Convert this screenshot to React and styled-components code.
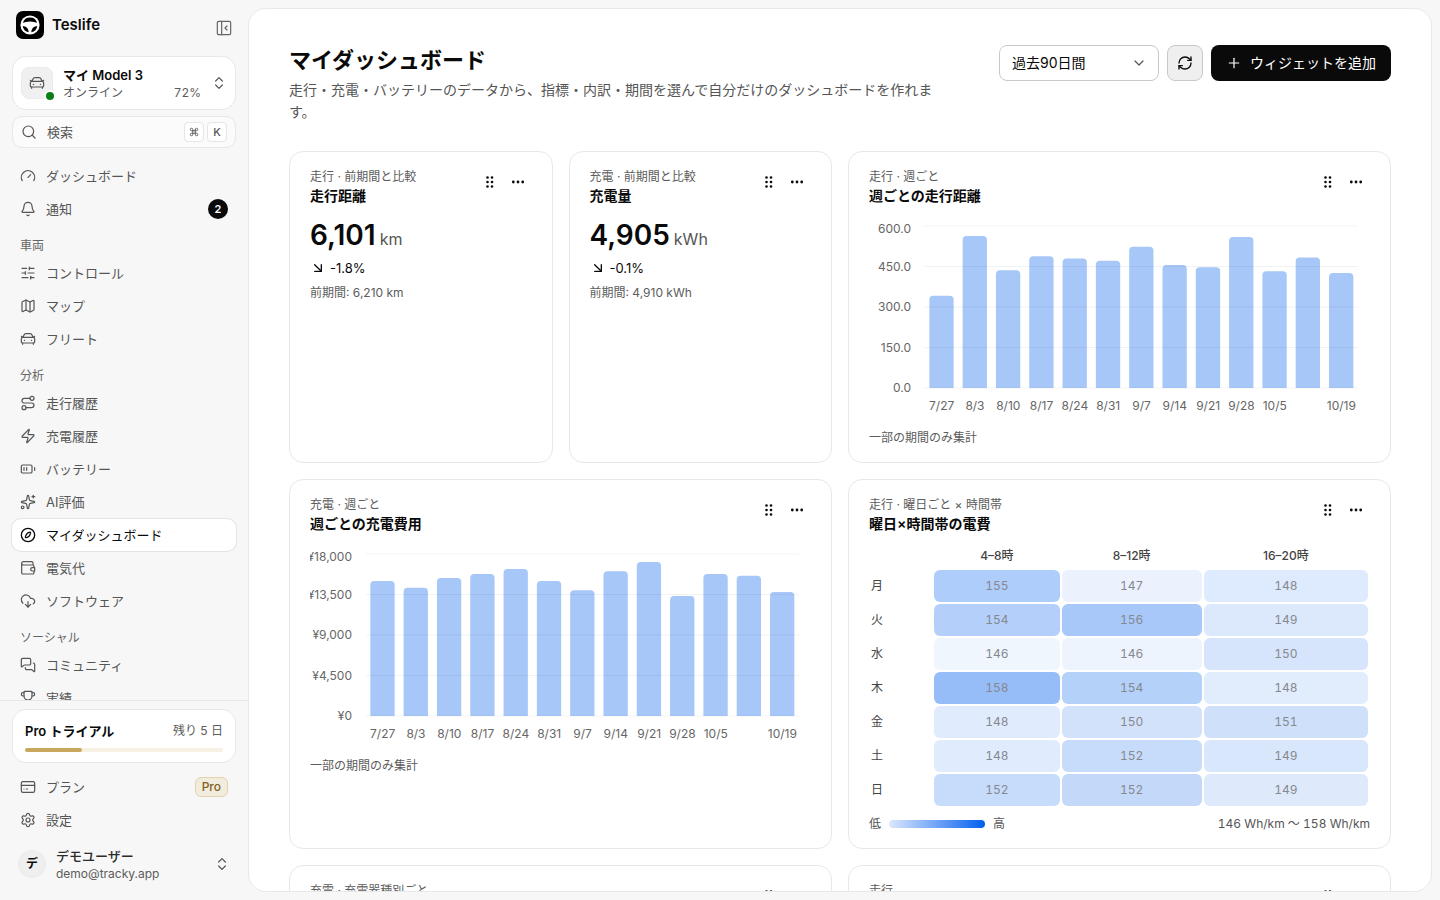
import React from "react";
import styled, { createGlobalStyle, css } from "styled-components";
import {
  ArrowDownRight, BatteryMedium, Bell, ChevronDown, ChevronsUpDown, CloudDownload, Command, Gauge,
  Map as MapIcon, MessagesSquare, Plus, RefreshCw, Route, Search, Settings, SlidersHorizontal,
  Sparkles, Trophy, Zap,
} from "lucide-react";

const GlobalStyle = createGlobalStyle`
  *, *::before, *::after { box-sizing: border-box; }
  body {
    margin: 0;
    background: #f7f7f7;
    color: #0a0a0a;
    font-family: Inter, "Noto Sans CJK JP", sans-serif;
    font-size: 14px;
    line-height: 20px;
    -webkit-font-smoothing: antialiased;
  }
  button, select { font: inherit; color: inherit; }
  button { cursor: pointer; }
  h1, h2, p { margin: 0; }
  a { color: inherit; text-decoration: none; }
`;

/* ---------- icons ---------- */

const Stroke = ({ size = 16, strokeWidth = 1.8, children }) => (
  <svg width={size} height={size} viewBox="0 0 24 24" fill="none" stroke="currentColor"
    strokeWidth={strokeWidth} strokeLinecap="round" strokeLinejoin="round" aria-hidden="true">
    {children}
  </svg>
);

const CarIcon = (p) => (
  <Stroke {...p}>
    <path d="M4.500 9.500 6 5.900A3 3 0 0 1 8.800 4h6.400A3 3 0 0 1 18 5.900l1.500 3.600" />
    <path d="M2 8l2.500 1.500h15L22 8" />
    <path d="M4.500 9.500A2.500 2.500 0 0 0 2 12v4a2 2 0 0 0 2 2h16a2 2 0 0 0 2-2v-4a2.500 2.500 0 0 0-2.500-2.500" />
    <path d="M4 18v2M20 18v2M6.500 14h.5M17 14h.5" />
  </Stroke>
);

const CompassIcon = (p) => (
  <Stroke {...p}>
    <circle cx="12" cy="12" r="10" />
    <path d="M12.400 8.400c1.500-.7 2.700-1 3.200-.5s.2 1.700-.5 3.200c-.7 1.700-1.200 2.700-2.400 3.400-1.500.8-3.700 2.100-4.400 1.400s.4-2.900 1.200-4.400c.600-1.300 1.300-2.300 2.900-3.100Z" />
  </Stroke>
);

const WalletIcon = (p) => (
  <Stroke {...p}>
    <path d="M2.500 5v14a2 2 0 0 0 2 2h14.500a2 2 0 0 0 2-2v-2M21 11V9.500a2 2 0 0 0-2-2H5a2.500 2.500 0 0 1-2.500-2.500A2.500 2.500 0 0 1 5 2.500h12.500a2 2 0 0 1 2 2v3" />
    <path d="M22 11.500h-3.500a2.500 2.500 0 0 0 0 5H22Z" />
  </Stroke>
);

const CardIcon = (p) => (
  <Stroke {...p}>
    <rect x="2" y="4" width="20" height="16" rx="2.500" />
    <path d="M2 9.500h20M6 15h.01M9.500 15h2" />
  </Stroke>
);

const PanelIcon = (p) => (
  <Stroke {...p}>
    <rect x="2" y="2" width="20" height="20" rx="2" />
    <path d="M8.500 2v20M16.500 9l-3 3 3 3" />
  </Stroke>
);

const GripIcon = () => (
  <svg width="16" height="16" viewBox="0 0 16 16" fill="currentColor" aria-hidden="true">
    {[5.5, 10].map((x) => [3.5, 8, 12.5].map((y) => <circle key={`${x}-${y}`} cx={x} cy={y} r="1.300" />))}
  </svg>
);

const DotsIcon = () => (
  <svg width="16" height="16" viewBox="0 0 16 16" fill="currentColor" aria-hidden="true">
    {[3.3, 8, 12.7].map((x) => <circle key={x} cx={x} cy="8" r="1.400" />)}
  </svg>
);

const Logo = () => (
  <svg width="28" height="28" viewBox="0 0 28 28" aria-hidden="true">
    <rect width="28" height="28" rx="7" fill="#000" />
    <circle cx="14" cy="14" r="9.600" fill="#fff" />
    <path d="M6.900 11.800a7.400 7.400 0 0 1 14.200 0c-2-.3-3.600-1.300-7.100-1.300s-5.100 1-7.100 1.300Z" fill="#000" />
    <path d="M6.700 15c3.200.2 5.700 1.800 6 6.300a7.400 7.400 0 0 1-6-6.300ZM21.300 15c-3.200.2-5.700 1.800-6 6.300a7.400 7.400 0 0 0 6-6.300Z" fill="#000" />
  </svg>
);

/* ---------- sidebar ---------- */

const Shell = styled.div`
  display: grid;
  grid-template-columns: 248px minmax(0, 1fr);
  height: 100vh;
`;

const Sidebar = styled.aside`
  display: flex;
  flex-direction: column;
  min-height: 0;
`;

const SidebarTop = styled.div`
  display: flex;
  flex-direction: column;
  gap: 6px;
  padding: 0 12px;
`;

const Brand = styled.div`
  display: flex;
  align-items: center;
  gap: 8px;
  height: 50px;
  padding: 0 4px;
  font-size: 15px;
  font-weight: 600;
`;

const CollapseButton = styled.button`
  display: grid;
  place-items: center;
  align-self: flex-end;
  width: 32px;
  height: 32px;
  margin: 0 -8px 6px auto;
  padding: 0;
  border: 0;
  background: none;
  color: #666;
`;

const surface = css`
  border: 1px solid #e8e8e8;
  border-radius: 14px;
  background: #fff;
`;

const VehicleButton = styled.button`
  ${surface}
  display: flex;
  align-items: center;
  gap: 10px;
  height: 54px;
  padding: 0 8px;
  text-align: left;
`;

const VehicleThumb = styled.span`
  position: relative;
  display: grid;
  place-items: center;
  width: 32px;
  height: 32px;
  border: 1px solid #ebebeb;
  border-radius: 8px;
  background: #f0f0f0;
  color: #555;
`;

const StatusDot = styled.span`
  position: absolute;
  right: -4px;
  bottom: -4px;
  width: 12px;
  height: 12px;
  border: 2px solid #fff;
  border-radius: 50%;
  background: #0a7f16;
`;

const TwoLines = styled.span`
  display: flex;
  flex: 1;
  flex-direction: column;
  gap: 1px;
  min-width: 0;
`;

const Strong = styled.span`
  font-size: 13px;
  font-weight: ${(p) => (p.$medium ? 500 : 600)};
  line-height: 18px;
  color: ${(p) => (p.$medium ? "#2b2b2b" : "#0a0a0a")};
`;

const Small = styled.span`
  display: flex;
  justify-content: space-between;
  font-size: 12px;
  line-height: 16px;
  color: #5c5c5c;
  font-variant-numeric: ${(p) => (p.$tabular ? "tabular-nums" : "normal")};
`;

const Chevrons = styled.span`
  display: grid;
  width: 16px;
  color: #555;
`;

const SearchButton = styled.button`
  display: flex;
  align-items: center;
  gap: 10px;
  height: 32px;
  padding: 0 8px;
  border: 1px solid #e8e8e8;
  border-radius: 10px;
  background: #fbfbfb;
  color: #555;
  font-size: 13px;
`;

const Keys = styled.span`
  display: flex;
  gap: 3px;
  margin-left: auto;
`;

const Key = styled.kbd`
  display: grid;
  place-items: center;
  width: 20px;
  height: 20px;
  border: 1px solid #e6e6e6;
  border-radius: 4px;
  background: #fff;
  font: 500 11px Inter, sans-serif;
`;

const Nav = styled.nav`
  display: flex;
  flex: 1;
  flex-direction: column;
  gap: 1px;
  min-height: 0;
  margin-top: 10px;
  padding: 2px 12px 0;
  overflow: hidden;
`;

const NavHeading = styled.p`
  flex: none;
  padding: 12px 8px 2px;
  font-size: 12px;
  line-height: 16px;
  color: #666;
`;

const NavLink = styled.a`
  display: flex;
  flex: none;
  align-items: center;
  gap: 10px;
  height: 32px;
  padding: 0 8px;
  border-radius: 9px;
  color: #555;
  font-size: 13px;
  ${(p) => p.$active && css`
    background: #fff;
    box-shadow: 0 0 0 1px #e4e4e4;
    color: #0a0a0a;
  `}
`;

const CountBadge = styled.span`
  display: grid;
  place-items: center;
  width: 20px;
  height: 20px;
  margin-left: auto;
  border-radius: 50%;
  background: #0a0a0a;
  color: #fff;
  font-size: 11px;
  font-weight: 600;
`;

const PlanBadge = styled.span`
  margin-left: auto;
  padding: 0 6px;
  border: 1px solid #e3d3ac;
  border-radius: 6px;
  background: #f2ecdf;
  color: #80611b;
  font-size: 12px;
  font-weight: 500;
  line-height: 18px;
`;

const SidebarFooter = styled.div`
  display: flex;
  flex-direction: column;
  gap: 1px;
  padding: 8px 12px 16px;
  border-top: 1px solid #e8e8e8;
`;

const TrialCard = styled.div`
  ${surface}
  display: flex;
  flex-direction: column;
  gap: 8px;
  height: 54px;
  margin-bottom: 7px;
  padding: 12px;
`;

const TrialRow = styled.div`
  display: flex;
  align-items: center;
  justify-content: space-between;
`;

const Track = styled.div`
  flex: none;
  height: 4px;
  border-radius: 2px;
  background: #f7f1e4;
`;

const TrackFill = styled.div`
  height: 4px;
  border-radius: 2px;
  background: #c8a85f;
`;

const UserButton = styled.button`
  display: flex;
  align-items: center;
  gap: 10px;
  height: 40px;
  margin-top: 7px;
  padding: 0 6px;
  border: 0;
  background: none;
  text-align: left;
`;

const Avatar = styled.span`
  display: grid;
  place-items: center;
  width: 28px;
  height: 28px;
  border: 1px solid #e8e8e8;
  border-radius: 50%;
  background: #efefef;
  font-size: 12px;
  font-weight: 600;
`;

const SECTIONS = [
  { items: [{ icon: Gauge, label: "ダッシュボード" }, { icon: Bell, label: "通知", count: 2 }] },
  {
    title: "車両",
    items: [
      { icon: SlidersHorizontal, label: "コントロール" },
      { icon: MapIcon, label: "マップ" },
      { icon: CarIcon, label: "フリート" },
    ],
  },
  {
    title: "分析",
    items: [
      { icon: Route, label: "走行履歴" },
      { icon: Zap, label: "充電履歴" },
      { icon: BatteryMedium, label: "バッテリー" },
      { icon: Sparkles, label: "AI評価" },
      { icon: CompassIcon, label: "マイダッシュボード", active: true },
      { icon: WalletIcon, label: "電気代" },
      { icon: CloudDownload, label: "ソフトウェア" },
    ],
  },
  {
    title: "ソーシャル",
    items: [{ icon: MessagesSquare, label: "コミュニティ" }, { icon: Trophy, label: "実績" }],
  },
];

function NavItem({ icon: Icon, label, active, children }) {
  return (
    <NavLink href="#" $active={active} aria-current={active ? "page" : undefined}>
      <Icon size={16} strokeWidth={active ? 2 : 1.8} />
      {label}
      {children}
    </NavLink>
  );
}

function SidebarPanel() {
  return (
    <Sidebar>
      <SidebarTop>
        <Brand>
          <Logo />
          Teslife
          <CollapseButton aria-label="サイドバーを閉じる"><PanelIcon /></CollapseButton>
        </Brand>
        <VehicleButton>
          <VehicleThumb><CarIcon /><StatusDot /></VehicleThumb>
          <TwoLines>
            <Strong>マイ Model 3</Strong>
            <Small $tabular><span>オンライン</span><span>72%</span></Small>
          </TwoLines>
          <Chevrons><ChevronsUpDown size={16} strokeWidth={1.8} /></Chevrons>
        </VehicleButton>
        <SearchButton>
          <Search size={16} strokeWidth={1.8} />
          検索
          <Keys>
            <Key><Command size={10} strokeWidth={2.2} /></Key>
            <Key>K</Key>
          </Keys>
        </SearchButton>
      </SidebarTop>
      <Nav>
        {SECTIONS.map((section, i) => (
          <React.Fragment key={i}>
            {section.title && <NavHeading>{section.title}</NavHeading>}
            {section.items.map((item) => (
              <NavItem key={item.label} {...item}>
                {item.count && <CountBadge>{item.count}</CountBadge>}
              </NavItem>
            ))}
          </React.Fragment>
        ))}
      </Nav>
      <SidebarFooter>
        <TrialCard>
          <TrialRow>
            <Strong>Pro トライアル</Strong>
            <Small><span>残り 5 日</span></Small>
          </TrialRow>
          <Track><TrackFill style={{ width: `${(2 / 7) * 100}%` }} /></Track>
        </TrialCard>
        <NavItem icon={CardIcon} label="プラン"><PlanBadge>Pro</PlanBadge></NavItem>
        <NavItem icon={Settings} label="設定" />
        <UserButton>
          <Avatar>デ</Avatar>
          <TwoLines>
            <Strong $medium>デモユーザー</Strong>
            <Small>demo@tracky.app</Small>
          </TwoLines>
          <Chevrons><ChevronsUpDown size={16} strokeWidth={1.8} /></Chevrons>
        </UserButton>
      </SidebarFooter>
    </Sidebar>
  );
}

/* ---------- main panel ---------- */

const Panel = styled.main`
  min-height: 0;
  margin: 8px 8px 8px 0;
  padding: 36px 40px;
  overflow: auto;
  scrollbar-width: none;
  border: 1px solid #e8e8e8;
  border-radius: 18px;
  background: #fff;
`;

const PageHeader = styled.header`
  display: flex;
  align-items: flex-start;
  justify-content: space-between;
  gap: 24px;
  margin-bottom: 28px;
`;

const PageTitle = styled.h1`
  margin-bottom: 4px;
  font-size: 22px;
  font-weight: 600;
  line-height: 30px;
`;

const Lead = styled.p`
  max-width: 660px;
  color: #555;
  line-height: 22px;
`;

const Actions = styled.div`
  display: flex;
  flex: none;
  gap: 8px;
`;

const SelectBox = styled.label`
  position: relative;
  display: block;
  width: 160px;

  svg {
    position: absolute;
    top: 10px;
    right: 12px;
    color: #555;
    pointer-events: none;
  }
`;

const Select = styled.select`
  width: 100%;
  height: 36px;
  padding: 0 12px;
  appearance: none;
  border: 1px solid #c9c9c9;
  border-radius: 8px;
  background: #fff;
`;

const IconButton = styled.button`
  display: grid;
  place-items: center;
  width: 36px;
  height: 36px;
  padding: 0;
  border: 1px solid #c9c9c9;
  border-radius: 8px;
  background: #efefef;
`;

const PrimaryButton = styled.button`
  display: flex;
  align-items: center;
  justify-content: center;
  gap: 8px;
  min-width: 180px;
  height: 36px;
  padding: 0 14px;
  border: 0;
  border-radius: 8px;
  background: #0a0a0a;
  color: #fff;
`;

const Grid = styled.div`
  display: grid;
  grid-template-columns: repeat(4, minmax(0, 1fr));
  gap: 16px;
`;

const Card = styled.section`
  grid-column: span ${(p) => p.$span};
  padding: 16px 20px 15px;
  border: 1px solid #e8e8e8;
  border-radius: 14px;
  background: #fff;
`;

const CardHeader = styled.div`
  display: flex;
  align-items: flex-start;
  justify-content: space-between;
  margin-bottom: 12px;
`;

const Overline = styled.p`
  font-size: 12px;
  line-height: 18px;
  color: #5c5c5c;
`;

const CardTitle = styled.h2`
  font-size: 14px;
  font-weight: 600;
  line-height: 20px;
`;

const CardTools = styled.div`
  display: flex;

  button {
    display: grid;
    place-items: center;
    width: 28px;
    height: 28px;
    padding: 0;
    border: 0;
    background: none;
  }
`;

const Figure = styled.p`
  display: flex;
  align-items: baseline;
  gap: 4px;
  font-size: 28px;
  font-weight: 600;
  line-height: 34px;
`;

const Unit = styled.span`
  color: #555;
  font-size: 16px;
  font-weight: 400;
  line-height: 20px;
`;

const Delta = styled.p`
  display: flex;
  align-items: center;
  gap: 4px;
  margin: 6px 0;
  font-size: 13px;
  line-height: 20px;
`;

const Note = styled.p`
  font-size: 12px;
  line-height: 18px;
  color: #5c5c5c;
`;

function Widget({ span = 2, overline, title, children }) {
  return (
    <Card $span={span}>
      <CardHeader>
        <div>
          <Overline>{overline}</Overline>
          <CardTitle>{title}</CardTitle>
        </div>
        <CardTools>
          <button aria-label="並べ替え"><GripIcon /></button>
          <button aria-label="メニュー"><DotsIcon /></button>
        </CardTools>
      </CardHeader>
      {children}
    </Card>
  );
}

function Metric({ value, unit, delta, previous }) {
  return (
    <>
      <Figure>{value}<Unit>{unit}</Unit></Figure>
      <Delta><ArrowDownRight size={16} strokeWidth={2} />{delta}</Delta>
      <Note>前期間: {previous}</Note>
    </>
  );
}

/* ---------- bar chart ---------- */

const PLOT_TOP = 8;
const PLOT_HEIGHT = 162;
const WEEKS = ["7/27", "8/3", "8/10", "8/17", "8/24", "8/31", "9/7", "9/14", "9/21", "9/28", "10/5", "", "10/19"];

const ChartRow = styled.div`
  display: grid;
  grid-template-columns: 42px minmax(0, 1fr);
  gap: 14px;
  margin-bottom: 11px;
  padding-right: 12px;
`;

const ChartSvg = styled.svg`
  display: block;
  width: 100%;
  height: 200px;
  overflow: hidden;

  text { fill: #666; font-size: 12px; }
`;

function BarChart({ label, max, ticks, values }) {
  const step = 100 / values.length;
  const lineY = (i) => (PLOT_HEIGHT * i) / (ticks.length - 1);
  return (
    <ChartRow role="img" aria-label={label}>
      <ChartSvg>
        {ticks.map((tick, i) => (
          <text key={tick} x="42" y={PLOT_TOP + lineY(i) + (i === 0 ? 7 : 4)} textAnchor="end">{tick}</text>
        ))}
      </ChartSvg>
      <ChartSvg>
        <svg y={PLOT_TOP} width="100%" height={PLOT_HEIGHT}>
          {values.map((v, i) => {
            const h = (v / max) * PLOT_HEIGHT;
            return (
              <rect key={i} x={`${(i + 0.13) * step}%`} width={`${step * 0.73}%`} y={PLOT_HEIGHT - h}
                height={h + 8} rx="4" fill="#045fee" fillOpacity="0.35" />
            );
          })}
        </svg>
        {ticks.map((tick, i) => (
          <line key={tick} x1="0" x2="100%" y1={PLOT_TOP + lineY(i)} y2={PLOT_TOP + lineY(i)}
            stroke="#000" strokeOpacity="0.05" />
        ))}
        {WEEKS.map((week, i) => (
          <text key={i} x={`${(i + 0.5) * step}%`} y="192" textAnchor="middle">{week}</text>
        ))}
      </ChartSvg>
    </ChartRow>
  );
}

/* ---------- heat map ---------- */

const HeatTable = styled.table`
  width: 100%;
  margin-bottom: 7px;
  table-layout: fixed;
  border-spacing: 2px;
  font-size: 12px;
  line-height: 16px;
  font-variant-numeric: tabular-nums;

  th { padding: 0; color: #444; font-weight: 500; text-align: center; }
  thead th { height: 20px; vertical-align: top; font-variant-numeric: normal; }
  tbody th { font-weight: 400; text-align: left; }
`;

const HeatCell = styled.td`
  height: 32px;
  padding: 0;
  border-radius: 6px;
  background: ${(p) => p.$tone};
  color: #85888e;
  text-align: center;
`;

const Column = styled.col`
  width: ${(p) => p.$width};
`;

const LegendRow = styled.div`
  display: flex;
  align-items: center;
  gap: 8px;
  font-size: 12px;
  line-height: 18px;
  color: #555;
`;

const LegendRamp = styled.span`
  width: 96px;
  height: 8px;
  border-radius: 4px;
  background: linear-gradient(90deg, #dbe8fd, #045fee);
`;

const LegendRange = styled.span`
  margin-left: auto;
  font-variant-numeric: tabular-nums;
`;

const HOURS = ["4–8時", "8–12時", "16–20時"];
const HEAT = [
  ["月", [155, "#afcdfa"], [147, "#ebf2fe"], [148, "#deeafd"]],
  ["火", [154, "#b4d0fa"], [156, "#a8c8fa"], [149, "#dce9fd"]],
  ["水", [146, "#eff6fe"], [146, "#eef4fe"], [150, "#d7e5fc"]],
  ["木", [158, "#97bdf8"], [154, "#b4d1fa"], [148, "#e1ecfd"]],
  ["金", [148, "#e0ebfd"], [150, "#d2e2fb"], [151, "#cfe0fb"]],
  ["土", [148, "#e0ebfd"], [152, "#c7dcfb"], [149, "#d9e7fd"]],
  ["日", [152, "#c7dcfb"], [152, "#c4d9fa"], [149, "#deeafc"]],
];

function HeatMap() {
  return (
    <>
      <HeatTable>
        <colgroup>
          <Column $width="61px" />
          <Column $width="25.6%" />
          <Column $width="28.5%" />
          <Column $width="auto" />
        </colgroup>
        <thead>
          <tr>
            <th aria-label="曜日" />
            {HOURS.map((h) => <th key={h} scope="col">{h}</th>)}
          </tr>
        </thead>
        <tbody>
          {HEAT.map(([day, ...cells]) => (
            <tr key={day}>
              <th scope="row">{day}</th>
              {cells.map(([value, tone], i) => <HeatCell key={i} $tone={tone}>{value}</HeatCell>)}
            </tr>
          ))}
        </tbody>
      </HeatTable>
      <LegendRow>
        低<LegendRamp />高
        <LegendRange>146 Wh/km 〜 158 Wh/km</LegendRange>
      </LegendRow>
    </>
  );
}

export default function App() {
  return (
    <>
      <GlobalStyle />
      <Shell lang="ja">
        <SidebarPanel />
        <Panel>
          <PageHeader>
            <div>
              <PageTitle>マイダッシュボード</PageTitle>
              <Lead>走行・充電・バッテリーのデータから、指標・内訳・期間を選んで自分だけのダッシュボードを作れます。</Lead>
            </div>
            <Actions>
              <SelectBox>
                <Select aria-label="期間" defaultValue="90">
                  <option value="90">過去90日間</option>
                </Select>
                <ChevronDown size={16} strokeWidth={1.8} />
              </SelectBox>
              <IconButton aria-label="更新"><RefreshCw size={16} strokeWidth={2} /></IconButton>
              <PrimaryButton><Plus size={16} strokeWidth={1.8} />ウィジェットを追加</PrimaryButton>
            </Actions>
          </PageHeader>
          <Grid>
            <Widget span={1} overline="走行 · 前期間と比較" title="走行距離">
              <Metric value="6,101" unit="km" delta="-1.8%" previous="6,210 km" />
            </Widget>
            <Widget span={1} overline="充電 · 前期間と比較" title="充電量">
              <Metric value="4,905" unit="kWh" delta="-0.1%" previous="4,910 kWh" />
            </Widget>
            <Widget overline="走行 · 週ごと" title="週ごとの走行距離">
              <BarChart label="週ごとの走行距離" max={600} ticks={["600.0", "450.0", "300.0", "150.0", "0.0"]}
                values={[342, 563, 436, 488, 480, 471, 523, 456, 447, 559, 432, 483, 426]} />
              <Note>一部の期間のみ集計</Note>
            </Widget>
            <Widget overline="充電 · 週ごと" title="週ごとの充電費用">
              <BarChart label="週ごとの充電費用" max={18000} ticks={["¥18,000", "¥13,500", "¥9,000", "¥4,500", "¥0"]}
                values={[15000, 14250, 15330, 15780, 16330, 15000, 13970, 16080, 17110, 13330, 15780, 15590, 13780]} />
              <Note>一部の期間のみ集計</Note>
            </Widget>
            <Widget overline="走行 · 曜日ごと × 時間帯" title="曜日×時間帯の電費"><HeatMap /></Widget>
            <Widget overline="充電 · 充電器種別ごと" title="充電器種別" />
            <Widget overline="走行" title="走行" />
          </Grid>
        </Panel>
      </Shell>
    </>
  );
}
